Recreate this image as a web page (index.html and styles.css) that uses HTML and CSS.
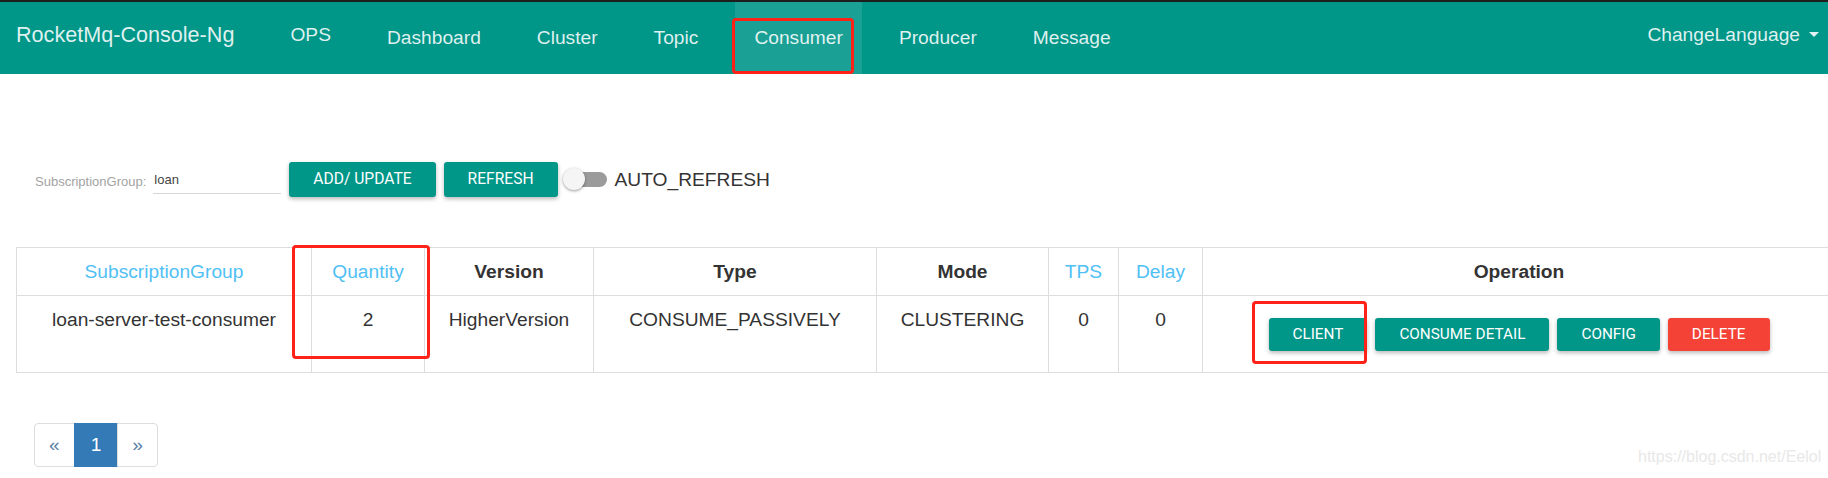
FILE: index.html
```html
<!DOCTYPE html>
<html lang="en">
<head>
    <meta charset="UTF-8">
    <title>RocketMq-Console-Ng</title>
    <link rel="stylesheet" href="styles.css">
</head>
<body>
    <div class="topbar">
        <a class="brand">RocketMq-Console-Ng</a>
        <ul class="menu">
            <li class="ops"><a>OPS</a></li>
            <li><a>Dashboard</a></li>
            <li><a>Cluster</a></li>
            <li><a>Topic</a></li>
            <li class="active"><a>Consumer</a></li>
            <li><a>Producer</a></li>
            <li><a>Message</a></li>
        </ul>
        <div class="lang">ChangeLanguage<span class="caret"></span></div>
    </div>

    <div class="content">
        <div class="query">
            <label class="query_label">SubscriptionGroup:</label>
            <input class="query_input" type="text" value="loan">
            <button class="btn btn_top">ADD/ UPDATE</button>
            <button class="btn btn_top">REFRESH</button>
            <span class="switch"><span class="knob"></span></span>
            <span class="switch_text">AUTO_REFRESH</span>
        </div>

        <div class="table_wrap">
            <table class="grid">
                <colgroup>
                    <col style="width:295px">
                    <col style="width:113px">
                    <col style="width:169px">
                    <col style="width:283px">
                    <col style="width:172px">
                    <col style="width:70px">
                    <col style="width:84px">
                    <col>
                </colgroup>
                <thead>
                    <tr>
                        <th class="sort">SubscriptionGroup</th>
                        <th class="sort">Quantity</th>
                        <th>Version</th>
                        <th>Type</th>
                        <th>Mode</th>
                        <th class="sort">TPS</th>
                        <th class="sort">Delay</th>
                        <th>Operation</th>
                    </tr>
                </thead>
                <tbody>
                    <tr>
                        <td>loan-server-test-consumer</td>
                        <td>2</td>
                        <td>HigherVersion</td>
                        <td>CONSUME_PASSIVELY</td>
                        <td>CLUSTERING</td>
                        <td>0</td>
                        <td>0</td>
                        <td class="ops_cell">
                            <div class="ops_btns">
                                <button class="btn btn_sm">CLIENT</button>
                                <button class="btn btn_sm">CONSUME DETAIL</button>
                                <button class="btn btn_sm">CONFIG</button>
                                <button class="btn btn_sm btn_red">DELETE</button>
                            </div>
                        </td>
                    </tr>
                </tbody>
            </table>
        </div>

        <ul class="pager">
            <li><a>&laquo;</a></li>
            <li class="current"><a>1</a></li>
            <li><a>&raquo;</a></li>
        </ul>
    </div>

    <!-- red marks drawn over the screenshot -->
    <div class="mark mark_nav"></div>
    <div class="mark mark_qty"></div>
    <div class="mark mark_client"></div>

    <div class="watermark">https://blog.csdn.net/Eelol</div>
</body>
</html>
```

FILE: styles.css
```css
body{
    margin: 0;
    font-family: "Liberation Sans", Arial, sans-serif;
    color: #333;
    background: #fff;
    position: relative;
    height: 478px;
    overflow: hidden;
}
.topbar{
    height: 72px;
    border-top: 2px solid #1e1e1e;
    background: #009688;
    display: flex;
    color: rgba(255,255,255,.88);
}
.brand{
    display: flex;
    align-items: center;
    padding: 0 0 6px 16px;
    margin-right: 28px;
    font-size: 21.6px;
}
.menu{
    list-style: none;
    margin: 0;
    padding: 0;
    display: flex;
}
.menu li{
    margin: 0 9px;
    display: flex;
}
.menu a{
    display: flex;
    align-items: center;
    padding: 0 19px;
    font-size: 19.2px;
}
.menu .ops a{
    padding-bottom: 7px;
}
.menu .active a{
    background: rgba(255,255,255,.1);
}
.lang{
    margin-left: auto;
    display: flex;
    align-items: center;
    padding: 0 9px 7px 0;
    font-size: 19.2px;
}
.caret{
    width: 0;
    height: 0;
    border-top: 5px solid;
    border-left: 5px solid transparent;
    border-right: 5px solid transparent;
    margin-left: 9px;
}

.content{
    padding: 88px 0 0 16px;
}
.query{
    display: flex;
    align-items: center;
    margin-left: 19px;
    height: 35px;
}
.query_label{
    font-size: 13px;
    color: #a3a3a3;
    margin: 4px 7px 0 0;
}
.query_input{
    width: 128px;
    height: 24px;
    box-sizing: border-box;
    border: 0;
    border-bottom: 1px solid #d6d6d6;
    padding: 0 0 4px 1px;
    font: 13px "Liberation Sans", Arial, sans-serif;
    color: #444;
    margin: 4px 8px 0 0;
    outline: none;
}
.btn{
    border: 0;
    border-radius: 3px;
    background: #009688;
    color: #fff;
    font-family: Roboto, sans-serif;
    font-size: 15.6px;
    line-height: 21px;
    padding: 7px 24px;
    box-shadow: 0 2px 4px rgba(0,0,0,.28);
    cursor: pointer;
}
.btn_top{
    margin-right: 8px;
    height: 35px;
}
.btn_sm{
    font-size: 15.3px;
    padding: 6px 24px;
    margin: 0 4px;
}
.btn_red{
    background: #f44336;
}
.switch{
    position: relative;
    width: 40px;
    height: 15px;
    border-radius: 8px;
    background: #9b9b9b;
    margin-left: 1px;
}
.knob{
    position: absolute;
    left: -4px;
    top: -4px;
    width: 22px;
    height: 22px;
    border-radius: 50%;
    background: #f5f5f5;
    box-shadow: 0 1px 3px rgba(0,0,0,.4);
}
.switch_text{
    margin-left: 8px;
    font-size: 19.2px;
}

.table_wrap{
    margin-top: 50px;
    overflow: hidden;
}
.grid{
    width: 1820px;
    border-collapse: collapse;
    table-layout: fixed;
    font-size: 19.2px;
    line-height: 1.42857;
}
.grid th,
.grid td{
    border: 1px solid #ddd;
    padding: 10px 8px;
    text-align: center;
    vertical-align: top;
}
.grid th{
    font-weight: bold;
    color: #333;
}
.grid th.sort{
    font-weight: normal;
    color: #4fc0f5;
}
.grid tbody tr{
    height: 77px;
}
.grid td.ops_cell{
    vertical-align: middle;
    padding: 0 8px;
}
.ops_btns{
    display: flex;
    justify-content: center;
}

.pager{
    list-style: none;
    display: flex;
    margin: 50px 0 0 18px;
    padding: 0;
}
.pager a{
    display: block;
    padding: 7px 14px;
    border: 1px solid #ddd;
    margin-left: -1px;
    font-size: 19.2px;
    line-height: 1.42857;
    color: #5a7fa6;
}
.pager li:first-child a{
    margin-left: 0;
    border-radius: 4px 0 0 4px;
}
.pager li:last-child a{
    border-radius: 0 4px 4px 0;
}
.pager .current a{
    background: #337ab7;
    border-color: #337ab7;
    color: #fff;
    padding: 7px 16px;
}

.mark{
    position: absolute;
    border: 3px solid #ff2218;
    border-radius: 4px;
    box-sizing: border-box;
}
.mark_nav{
    left: 732px;
    top: 18px;
    width: 122px;
    height: 56px;
}
.mark_qty{
    left: 292px;
    top: 245px;
    width: 138px;
    height: 114px;
}
.mark_client{
    left: 1252px;
    top: 301px;
    width: 115px;
    height: 63px;
}
.watermark{
    position: absolute;
    left: 1638px;
    top: 448px;
    font-size: 16px;
    color: #e8e8e8;
}
```
